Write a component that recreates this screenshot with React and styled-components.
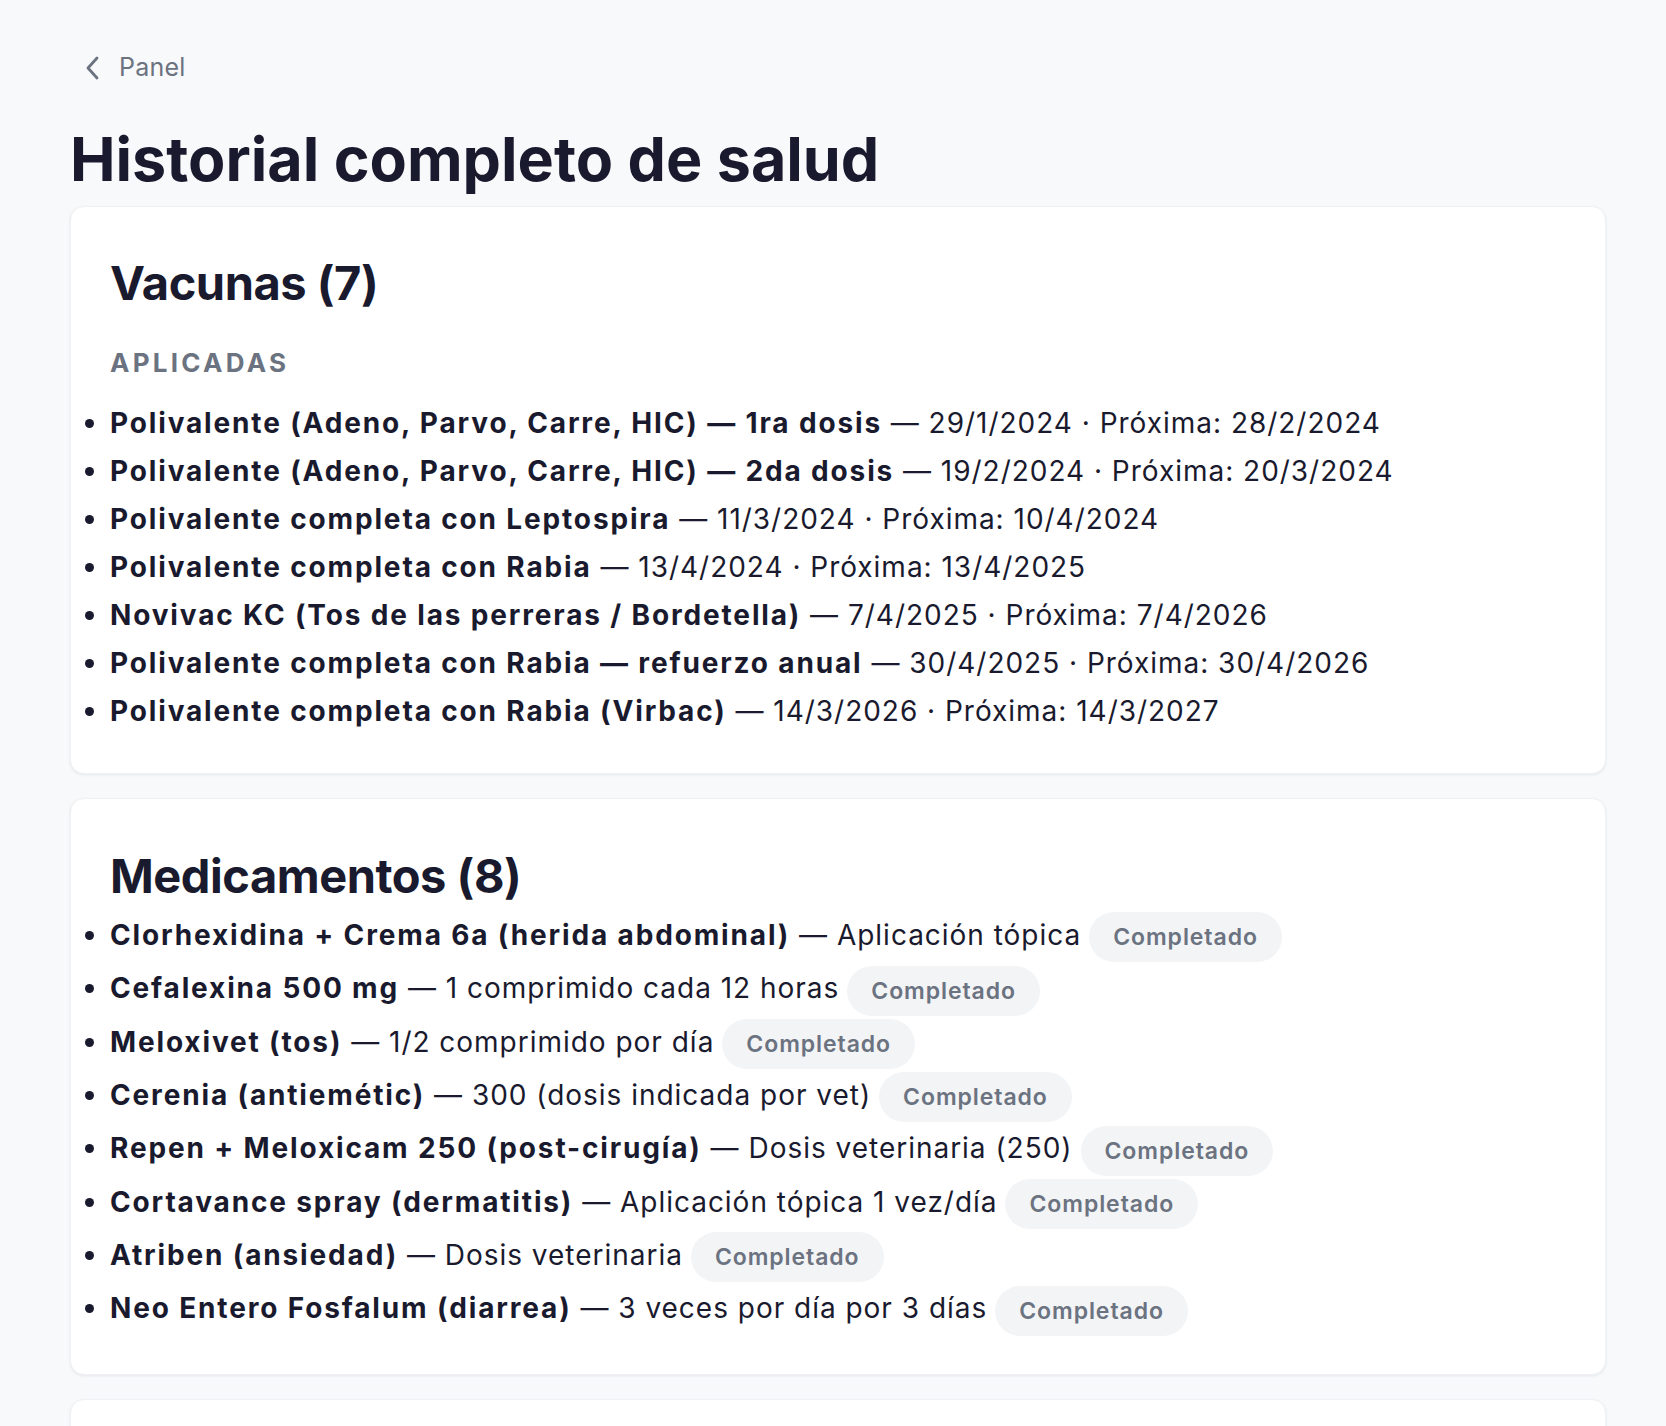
import React from 'react'
import styled, { createGlobalStyle } from 'styled-components'

const GlobalStyle = createGlobalStyle`
  * { box-sizing: border-box; }
  body {
    margin: 0;
    background: #f8f9fb;
    font-family: Inter, "Noto Sans", sans-serif;
    color: #1a1a2e;
  }
`

const Page = styled.div`
  padding: 49px 60px 0 70px;
  height: 1426px;
  overflow: hidden;
`

const BackLink = styled.a`
  display: inline-flex;
  align-items: center;
  gap: 18px;
  padding-left: 14px;
  font-size: 25px;
  line-height: 1.5;
  letter-spacing: 0.01em;
  color: #6b7280;
  text-decoration: none;
  cursor: pointer;
`

const Title = styled.h1`
  margin: 36px 0 10px;
  font-size: 61px;
  line-height: 1.2;
  font-weight: 700;
  letter-spacing: 0;
  color: #1a1a2e;
`

const Stack = styled.div`
  display: flex;
  flex-direction: column;
  gap: 24px;
`

const Card = styled.section`
  background: #fff;
  border-radius: 14px;
  border: 1px solid #f0f1f4;
  box-shadow: 0 1px 3px rgba(17, 24, 39, 0.08);
  padding: ${p => p.$pad || '48px 39px 38px'};
  min-height: ${p => p.$min || '0'};
`

const CardTitle = styled.h2`
  margin: 0;
  font-size: 47px;
  line-height: 1.2;
  font-weight: 700;
  letter-spacing: -0.01em;
`

const Label = styled.div`
  margin-top: 34px;
  font-size: 26px;
  line-height: 1.4;
  font-weight: 700;
  letter-spacing: 0.125em;
  text-transform: uppercase;
  color: #6b7280;
`

const List = styled.ul`
  margin: ${p => p.$top || '18px'} 0 0;
  padding: 0;
  list-style: disc outside;
`

const Item = styled.li`
  font-size: 28px;
  line-height: ${p => p.$lh || '48px'};
  letter-spacing: 0.035em;
  color: #1a1a2e;
`

const Name = styled.strong`
  font-weight: 700;
  letter-spacing: 0.066em;
`

const Badge = styled.span`
  display: inline-block;
  margin-left: 8px;
  padding: 13px 24px;
  border-radius: 999px;
  background: #f3f4f6;
  color: #6b7280;
  font-size: 23px;
  line-height: 24px;
  font-weight: 600;
  letter-spacing: 0.04em;
  vertical-align: middle;
`

const Chevron = () => (
  <svg width="17" height="26" viewBox="0 0 17 26" fill="none">
    <path d="M13 3 L4 13 L13 23" stroke="#6b7280" strokeWidth="2.8" strokeLinecap="round" strokeLinejoin="round" />
  </svg>
)

const vacunas = [
  ['Polivalente (Adeno, Parvo, Carre, HIC) — 1ra dosis', '29/1/2024', '28/2/2024'],
  ['Polivalente (Adeno, Parvo, Carre, HIC) — 2da dosis', '19/2/2024', '20/3/2024'],
  ['Polivalente completa con Leptospira', '11/3/2024', '10/4/2024'],
  ['Polivalente completa con Rabia', '13/4/2024', '13/4/2025'],
  ['Novivac KC (Tos de las perreras / Bordetella)', '7/4/2025', '7/4/2026'],
  ['Polivalente completa con Rabia — refuerzo anual', '30/4/2025', '30/4/2026'],
  ['Polivalente completa con Rabia (Virbac)', '14/3/2026', '14/3/2027'],
]

const medicamentos = [
  ['Clorhexidina + Crema 6a (herida abdominal)', 'Aplicación tópica'],
  ['Cefalexina 500 mg', '1 comprimido cada 12 horas'],
  ['Meloxivet (tos)', '1/2 comprimido por día'],
  ['Cerenia (antiemétic)', '300 (dosis indicada por vet)'],
  ['Repen + Meloxicam 250 (post-cirugía)', 'Dosis veterinaria (250)'],
  ['Cortavance spray (dermatitis)', 'Aplicación tópica 1 vez/día'],
  ['Atriben (ansiedad)', 'Dosis veterinaria'],
  ['Neo Entero Fosfalum (diarrea)', '3 veces por día por 3 días'],
]

export default function App() {
  return (
    <>
      <GlobalStyle />
      <Page>
        <BackLink>
          <Chevron />
          Panel
        </BackLink>
        <Title>Historial completo de salud</Title>
        <Stack>
          <Card>
            <CardTitle>Vacunas ({vacunas.length})</CardTitle>
            <Label>Aplicadas</Label>
            <List>
              {vacunas.map(([name, date, next]) => (
                <Item key={name + date}>
                  <Name>{name}</Name> — {date} · Próxima: {next}
                </Item>
              ))}
            </List>
          </Card>
          <Card $pad="49px 39px 38px">
            <CardTitle>Medicamentos ({medicamentos.length})</CardTitle>
            <List $top="4px">
              {medicamentos.map(([name, dose]) => (
                <Item key={name} $lh="52px">
                  <Name>{name}</Name> — {dose}
                  <Badge>Completado</Badge>
                </Item>
              ))}
            </List>
          </Card>
          <Card $min="200px" />
        </Stack>
      </Page>
    </>
  )
}
